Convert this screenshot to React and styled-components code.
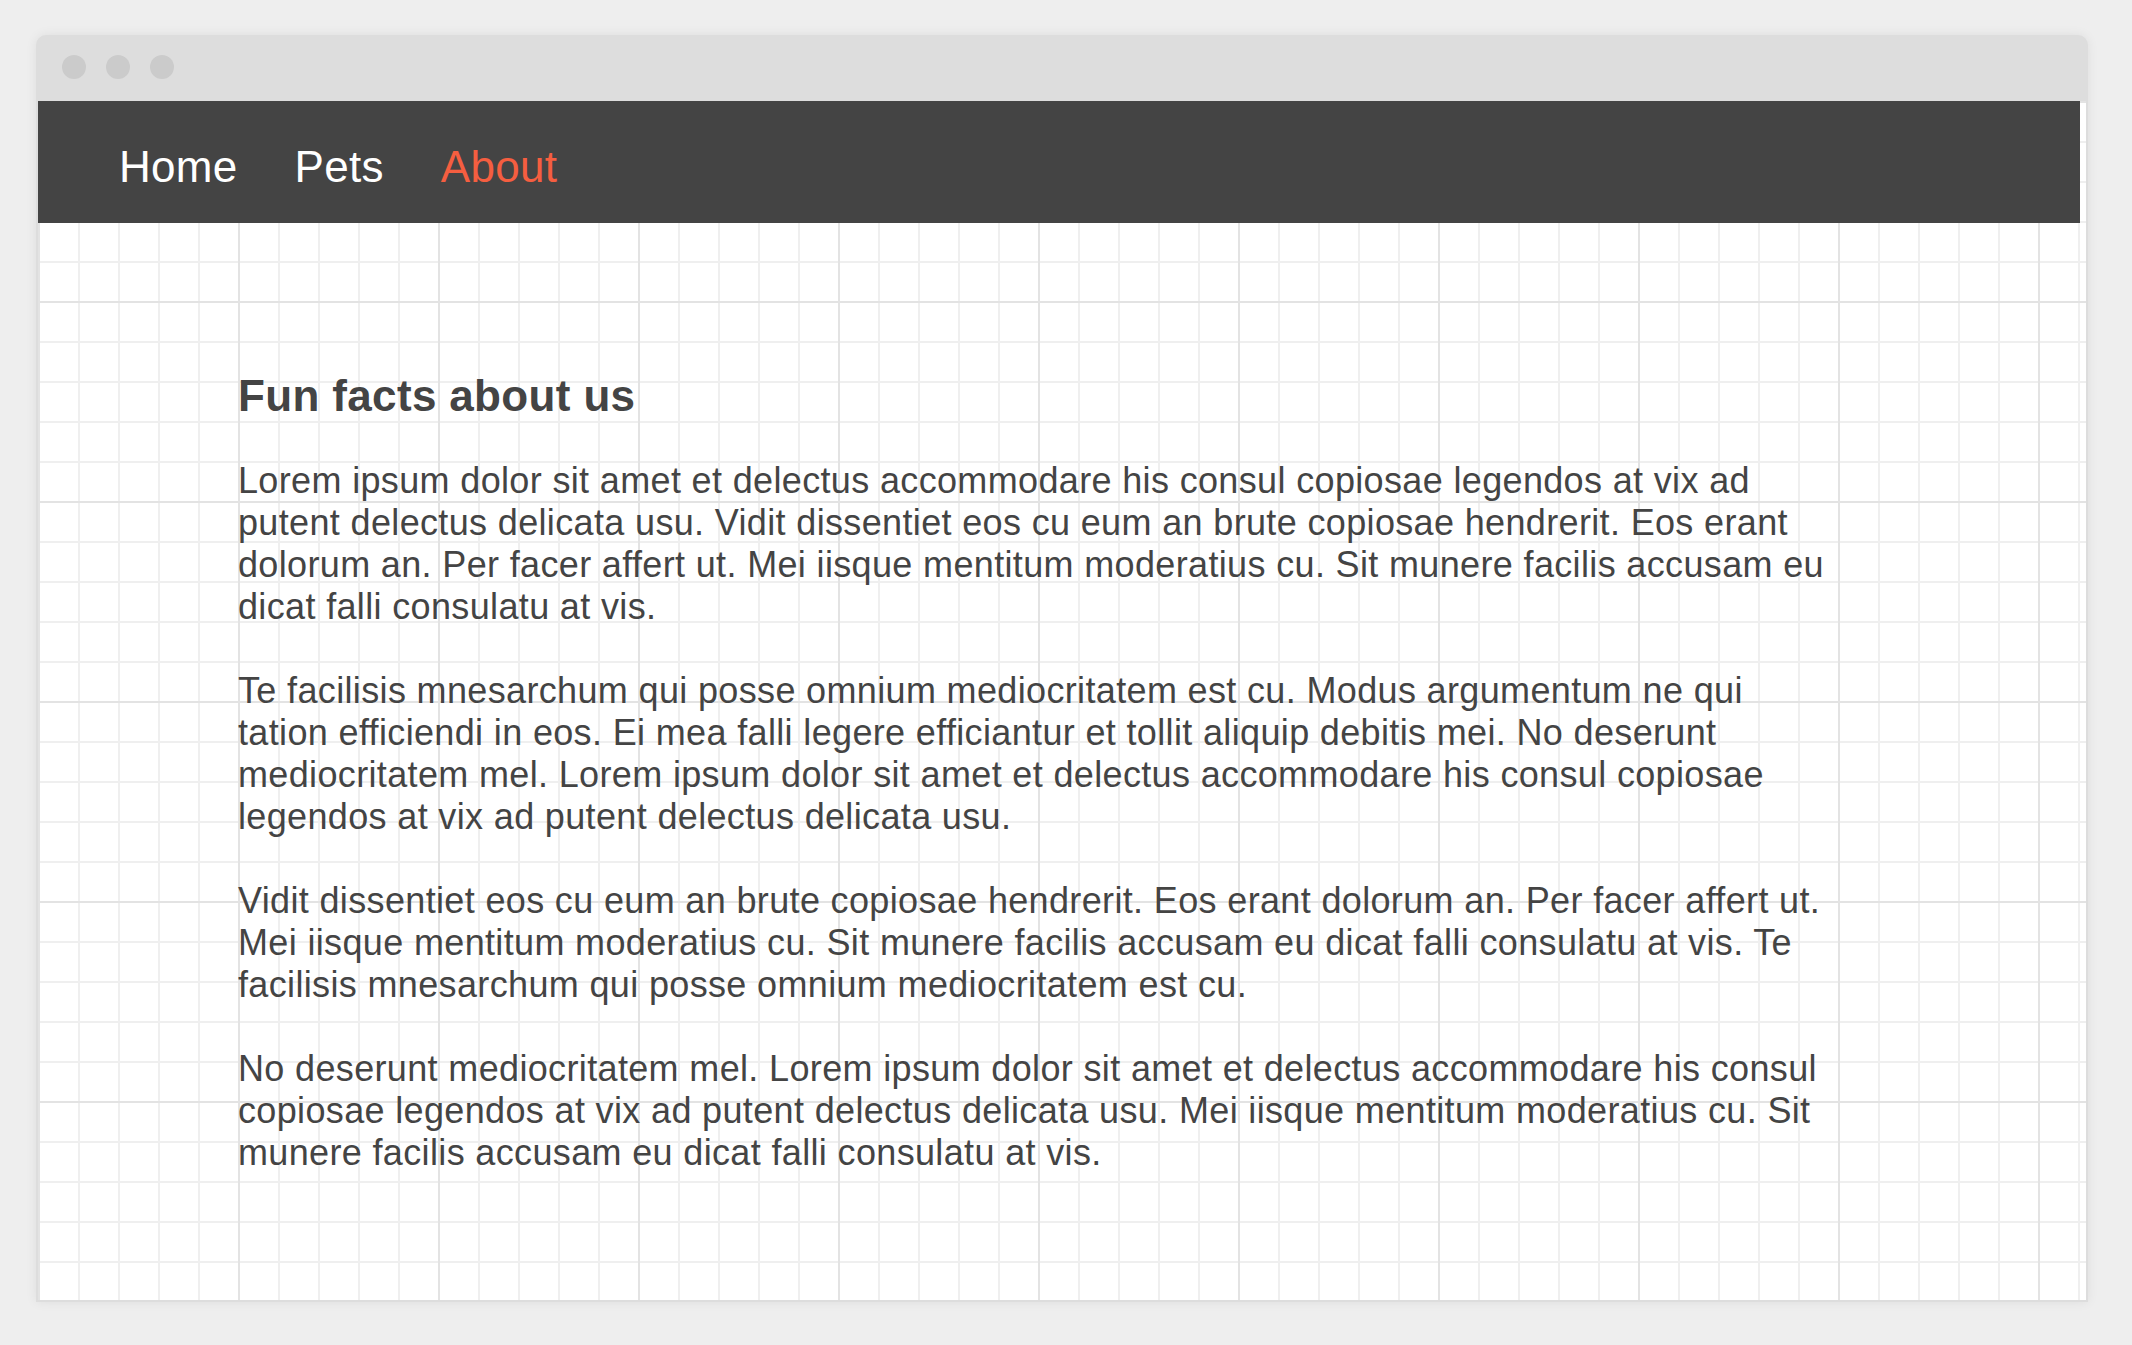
import React from 'react'
import styled, { createGlobalStyle } from 'styled-components'

const GlobalStyle = createGlobalStyle`
  html, body {
    margin: 0;
    padding: 0;
    background: #eeeeee;
  }
  * {
    box-sizing: border-box;
  }
`

const Page = styled.div`
  min-height: 100vh;
  padding: 35px 44px 43px 36px;
  display: flex;
  flex-direction: column;
  font-family: "Liberation Sans", Arial, sans-serif;
`

const BrowserWindow = styled.div`
  flex: 1;
  display: flex;
  flex-direction: column;
  background: #dddddd;
  border-radius: 10px 10px 0 0;
  padding: 0 2px 2px;
  box-shadow: 0 0 12px rgba(0, 0, 0, 0.07);
`

const TitleBar = styled.div`
  height: 66px;
  flex: none;
  display: flex;
  align-items: center;
  gap: 20px;
  padding: 0 0 2px 24px;
`

const Dot = styled.span`
  width: 24px;
  height: 24px;
  border-radius: 50%;
  background: #cbcbcb;
`

const Viewport = styled.div`
  flex: 1;
  display: flex;
  flex-direction: column;
  background-color: #ffffff;
  background-image:
    linear-gradient(to right, transparent 198px, #e3e3e3 198px),
    linear-gradient(to bottom, transparent 198px, #e3e3e3 198px),
    linear-gradient(to right, transparent 38px, #efefef 38px),
    linear-gradient(to bottom, transparent 38px, #efefef 38px);
  background-size: 200px 100%, 100% 200px, 40px 100%, 100% 40px;
  background-position: 2px 2px;
`

const NavBar = styled.nav`
  width: calc(100% - 6px);
  height: 122px;
  flex: none;
  display: flex;
  align-items: center;
  gap: 57px;
  padding: 10px 0 0 81px;
  background: #444444;
`

const NavLink = styled.a`
  font-size: 44px;
  letter-spacing: 0.3px;
  color: ${p => (p.$active ? '#f55e40' : '#ffffff')};
  text-decoration: none;
  cursor: pointer;
`

const Article = styled.main`
  padding: 148px 0 60px 200px;
  max-width: 1800px;
  color: #444444;
`

const Heading = styled.h2`
  margin: 0 0 39px;
  font-size: 44px;
  font-weight: bold;
  letter-spacing: 0.35px;
`

const Paragraph = styled.p`
  margin: 0 0 42px;
  font-size: 36px;
  line-height: 42px;
  letter-spacing: 0.35px;
`

const paragraphs = [
  'Lorem ipsum dolor sit amet et delectus accommodare his consul copiosae legendos at vix ad putent delectus delicata usu. Vidit dissentiet eos cu eum an brute copiosae hendrerit. Eos erant dolorum an. Per facer affert ut. Mei iisque mentitum moderatius cu. Sit munere facilis accusam eu dicat falli consulatu at vis.',
  'Te facilisis mnesarchum qui posse omnium mediocritatem est cu. Modus argumentum ne qui tation efficiendi in eos. Ei mea falli legere efficiantur et tollit aliquip debitis mei. No deserunt mediocritatem mel. Lorem ipsum dolor sit amet et delectus accommodare his consul copiosae legendos at vix ad putent delectus delicata usu.',
  'Vidit dissentiet eos cu eum an brute copiosae hendrerit. Eos erant dolorum an. Per facer affert ut. Mei iisque mentitum moderatius cu. Sit munere facilis accusam eu dicat falli consulatu at vis. Te facilisis mnesarchum qui posse omnium mediocritatem est cu.',
  'No deserunt mediocritatem mel. Lorem ipsum dolor sit amet et delectus accommodare his consul copiosae legendos at vix ad putent delectus delicata usu. Mei iisque mentitum moderatius cu. Sit munere facilis accusam eu dicat falli consulatu at vis.'
]

const links = ['Home', 'Pets', 'About']

export default function App() {
  return (
    <Page>
      <GlobalStyle />
      <BrowserWindow>
        <TitleBar>
          <Dot />
          <Dot />
          <Dot />
        </TitleBar>
        <Viewport>
          <NavBar>
            {links.map(link => (
              <NavLink key={link} $active={link === 'About'}>{link}</NavLink>
            ))}
          </NavBar>
          <Article>
            <Heading>Fun facts about us</Heading>
            {paragraphs.map((text, i) => (
              <Paragraph key={i}>{text}</Paragraph>
            ))}
          </Article>
        </Viewport>
      </BrowserWindow>
    </Page>
  )
}
